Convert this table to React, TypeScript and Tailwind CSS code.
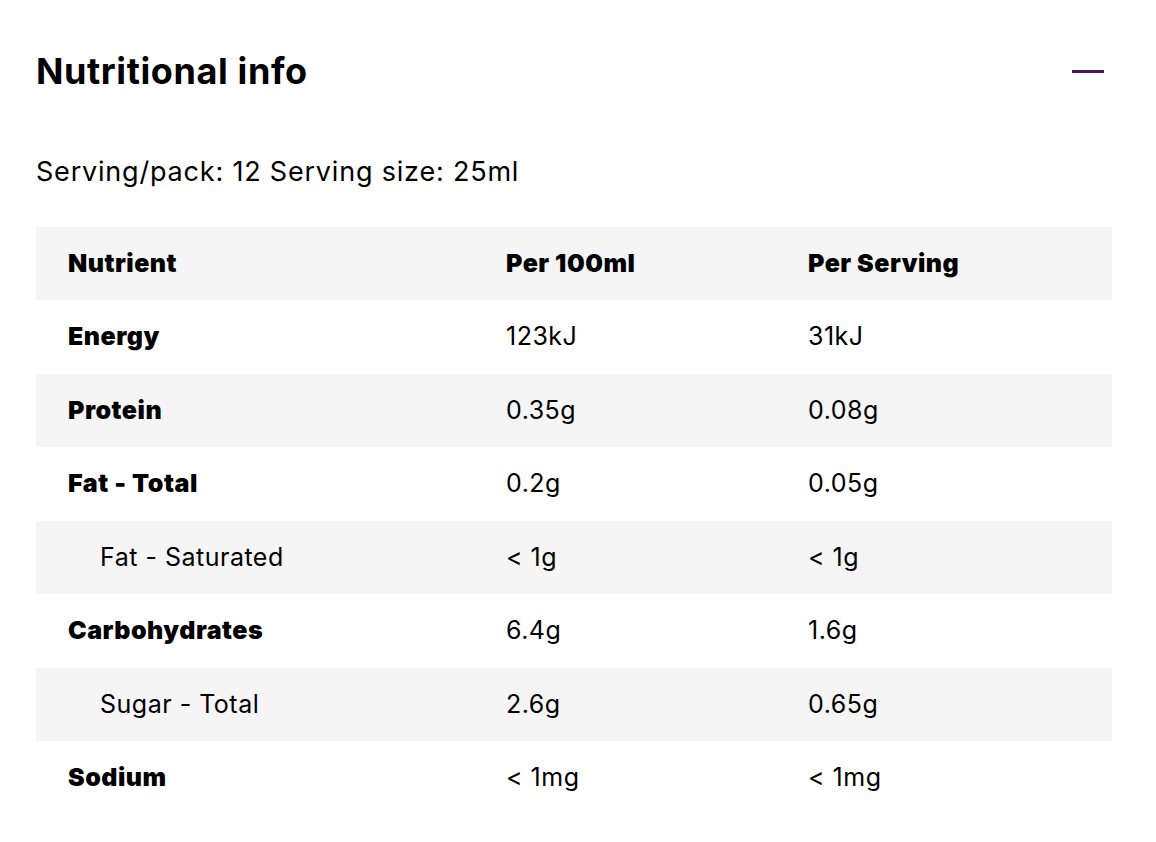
import React from "react";

type Row = { name: string; per100: string; perServing: string; sub?: boolean };

const rows: Row[] = [
  { name: "Energy", per100: "123kJ", perServing: "31kJ" },
  { name: "Protein", per100: "0.35g", perServing: "0.08g" },
  { name: "Fat - Total", per100: "0.2g", perServing: "0.05g" },
  { name: "Fat - Saturated", per100: "< 1g", perServing: "< 1g", sub: true },
  { name: "Carbohydrates", per100: "6.4g", perServing: "1.6g" },
  { name: "Sugar - Total", per100: "2.6g", perServing: "0.65g", sub: true },
  { name: "Sodium", per100: "< 1mg", perServing: "< 1mg" },
];

export default function App() {
  return (
    <div className="w-[1156px] h-[842px] bg-white text-black px-9 font-['Inter',sans-serif]">
      {/* Accordion header */}
      <div className="flex items-center justify-between h-[142px]">
        <h2 className="text-[36px] font-bold tracking-[0.6px]">Nutritional info</h2>
        <button className="mr-4 w-8 h-8 flex items-center justify-center">
          <span className="block w-8 h-[3px] bg-[#4b1561]" />
        </button>
      </div>

      <p className="text-[27px] leading-[26px] mt-[17px] mb-[42px] tracking-[0.8px]">
        Serving/pack: 12 Serving size: 25ml
      </p>

      {/* Table */}
      <div className="w-[1076px] text-[25px] tracking-[0.5px]">
        <div className="grid grid-cols-[438px_302px_1fr] items-center h-[73px] pl-8 bg-[#f5f5f5] font-black">
          <div>Nutrient</div>
          <div>Per 100ml</div>
          <div>Per Serving</div>
        </div>
        {rows.map((r, i) => (
          <div
            key={r.name}
            className={
              "grid grid-cols-[438px_302px_1fr] items-center h-[73.5px] pl-8 " +
              (i % 2 === 1 ? "bg-[#f5f5f5]" : "bg-white")
            }
          >
            <div className={r.sub ? "pl-8 font-normal" : "font-black"}>{r.name}</div>
            <div>{r.per100}</div>
            <div>{r.perServing}</div>
          </div>
        ))}
      </div>
    </div>
  );
}
